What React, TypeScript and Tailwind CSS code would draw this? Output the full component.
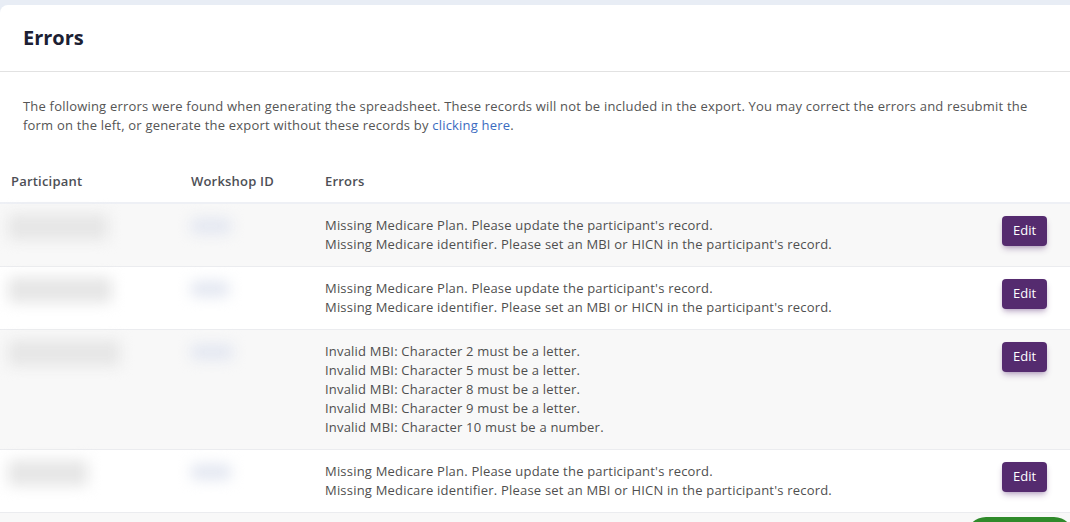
import React from "react";

const rows = [
  {
    name: "w-[100px]",
    id: "w-[40px]",
    errors: [
      "Missing Medicare Plan. Please update the participant's record.",
      "Missing Medicare identifier. Please set an MBI or HICN in the participant's record.",
    ],
  },
  {
    name: "w-[104px]",
    id: "w-[38px]",
    errors: [
      "Missing Medicare Plan. Please update the participant's record.",
      "Missing Medicare identifier. Please set an MBI or HICN in the participant's record.",
    ],
  },
  {
    name: "w-[112px]",
    id: "w-[42px]",
    errors: [
      "Invalid MBI: Character 2 must be a letter.",
      "Invalid MBI: Character 5 must be a letter.",
      "Invalid MBI: Character 8 must be a letter.",
      "Invalid MBI: Character 9 must be a letter.",
      "Invalid MBI: Character 10 must be a number.",
    ],
  },
  {
    name: "w-[80px]",
    id: "w-[40px]",
    errors: [
      "Missing Medicare Plan. Please update the participant's record.",
      "Missing Medicare identifier. Please set an MBI or HICN in the participant's record.",
    ],
  },
];

export default function App() {
  return (
    <div
      className="relative h-[522px] w-[1070px] overflow-hidden bg-[#e8edf5] pt-[5px] text-[13px] tracking-[0.2px] text-[#4a4a4a]"
      style={{ fontFamily: '"Open Sans", sans-serif' }}
    >
      <div className="h-full rounded-tl-lg bg-white">
        {/* header */}
        <div className="flex h-[67px] items-center border-b border-[#e2e2e2] px-[23px]">
          <h2 className="text-[20px] font-bold tracking-normal text-[#1c2033]">Errors</h2>
        </div>

        <p className="px-[23px] pt-[25px] leading-[19px] text-[#555]">
          The following errors were found when generating the spreadsheet. These records will not be
          included in the export. You may correct the errors and resubmit the form on the left, or
          generate the export without these records by <a href="#" className="text-[#3b6bbf]">clicking here</a>.
        </p>

        <table className="mt-[37px] w-full border-collapse">
          <thead>
            <tr className="border-b-2 border-[#eef0f5] text-left font-semibold text-[#4d4f56]">
              <th className="w-[191px] pb-[10px] pl-[11px] font-semibold">Participant</th>
              <th className="w-[134px] pb-[10px] font-semibold">Workshop ID</th>
              <th className="pb-[10px] font-semibold">Errors</th>
              <th className="w-[90px]"></th>
            </tr>
          </thead>
          <tbody>
            {rows.map((r, i) => (
              <tr
                key={i}
                className={
                  "border-b border-[#ebecef] align-top " + (i % 2 === 0 ? "bg-[#f8f8f8]" : "bg-white")
                }
              >
                <td className="pl-[8px] pt-[10px]">
                  <div className={"h-[26px] rounded bg-[#e6e6e6] blur-[7px] " + r.name}></div>
                </td>
                <td className="pt-[10px]">
                  <div className="flex h-[24px] items-center">
                    <div className={"h-[16px] rounded bg-[#e3e7f1] blur-[7px] " + r.id}></div>
                  </div>
                </td>
                <td className="py-[12px] leading-[19px] text-[#4f4f4f]">
                  {r.errors.map((e, j) => (
                    <div key={j}>{e}</div>
                  ))}
                </td>
                <td className="pr-[23px] pt-[12px] text-right">
                  <button className="h-[30px] w-[45px] rounded bg-[#552b6f] text-[13px] tracking-normal text-white shadow-md shadow-[#552b6f]/30">
                    Edit
                  </button>
                </td>
              </tr>
            ))}
            <tr className="bg-[#f8f8f8]">
              <td colSpan={4} className="h-[40px]"></td>
            </tr>
          </tbody>
        </table>
      </div>

      {/* floating green pill */}
      <div className="absolute left-[966px] top-[517px] h-[40px] w-[108px] rounded-full bg-[#2f8a2a]"></div>
    </div>
  );
}
